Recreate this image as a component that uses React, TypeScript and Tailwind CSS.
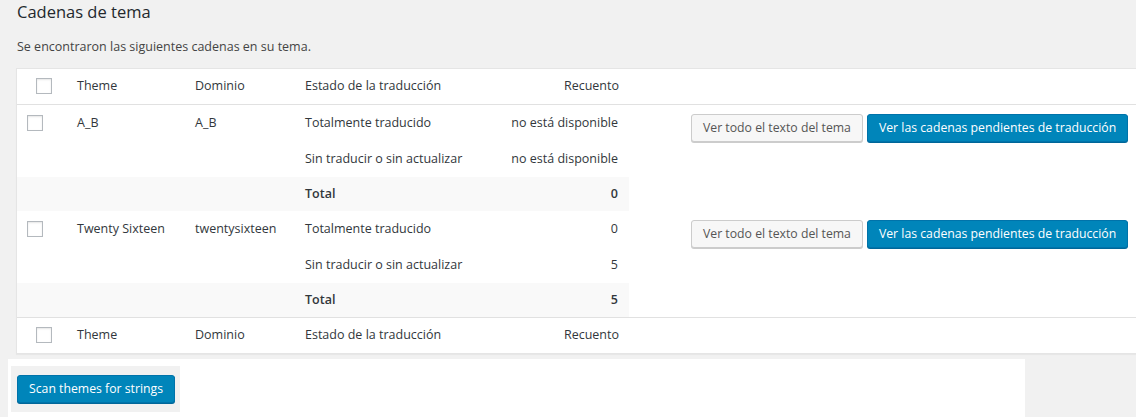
const rows = [
  { theme: 'A_B', domain: 'A_B', done: 'no está disponible', pending: 'no está disponible', total: '0' },
  { theme: 'Twenty Sixteen', domain: 'twentysixteen', done: '0', pending: '5', total: '5' },
]

function Box({ className = '' }: { className?: string }) {
  return <span className={`block h-4 w-4 border border-[#b4b9be] bg-white shadow-[inset_0_1px_2px_rgba(0,0,0,0.1)] ${className}`} />
}

function HeadRow({ border }: { border: 'b' | 't' }) {
  return (
    <div className={`flex h-9 items-center ${border === 'b' ? 'border-b' : 'border-t'} border-[#e1e1e1]`}>
      <div className="w-[50px] pl-[19px]"><Box /></div>
      <div className="w-[118px] pl-[10px]">Theme</div>
      <div className="w-[110px] pl-[10px]">Dominio</div>
      <div className="w-[186px] pl-[10px]">Estado de la traducción</div>
      <div className="w-[148px] pr-[10px] text-right">Recuento</div>
    </div>
  )
}

export default function App() {
  return (
    <div className="min-h-[417px] bg-[#f1f1f1] text-[12.5px] text-[#32373c]" style={{ fontFamily: '"Open Sans", sans-serif' }}>
      <h2 className="pl-[17px] pt-[1px] text-[16.5px] leading-[22px] text-[#23282d]">Cadenas de tema</h2>
      <p className="pl-[17px] pt-[15px] text-[#444]">Se encontraron las siguientes cadenas en su tema.</p>

      <div className="ml-4 mt-[11px] border border-r-0 border-[#e5e5e5] bg-white shadow-[0_1px_1px_rgba(0,0,0,0.04)]">
        <HeadRow border="b" />
        {rows.map((r) => (
          <div key={r.theme} className="flex">
            <div className="w-[612px]">
              <div className="flex h-9 items-center pt-px">
                <div className="w-[50px] pl-[10px]"><Box /></div>
                <div className="w-[118px] pl-[10px]">{r.theme}</div>
                <div className="w-[110px] pl-[10px]">{r.domain}</div>
                <div className="w-[186px] pl-[10px]">Totalmente traducido</div>
                <div className="w-[148px] pr-[11px] text-right">{r.done}</div>
              </div>
              <div className="flex h-9 items-center pt-px">
                <div className="w-[278px]" />
                <div className="w-[186px] pl-[10px]">Sin traducir o sin actualizar</div>
                <div className="w-[148px] pr-[11px] text-right">{r.pending}</div>
              </div>
              <div className="flex h-[34px] items-center bg-[#f9f9f9] pt-px font-semibold">
                <div className="w-[278px]" />
                <div className="w-[186px] pl-[10px]">Total</div>
                <div className="w-[148px] pr-[11px] text-right">{r.total}</div>
              </div>
            </div>
            <div className="flex items-start gap-1 pl-[62px] pt-[9px] text-[12.25px]">
              <button className="h-7 whitespace-nowrap rounded-[3px] border border-[#cccccc] bg-[#f7f7f7] px-[11px] text-[#555] shadow-[0_1px_0_#cccccc]">
                Ver todo el texto del tema
              </button>
              <button className="h-7 whitespace-nowrap rounded-[3px] border border-[#0073aa] bg-[#0085ba] px-[11px] text-white shadow-[0_1px_0_#006799]">
                Ver las cadenas pendientes de traducción
              </button>
            </div>
          </div>
        ))}
        <HeadRow border="t" />
      </div>

      <div className="ml-2 mt-[5px] w-[1017px] bg-white pt-[7px] pb-[6px]">
        <div className="ml-[3px] w-[169px] bg-[#f1f1f1] px-[6px] py-[9px]">
          <button className="h-7 whitespace-nowrap rounded-[3px] border border-[#0073aa] bg-[#0085ba] px-[11px] text-[12.25px] text-white shadow-[0_1px_0_#006799]">
            Scan themes for strings
          </button>
        </div>
      </div>
    </div>
  )
}
